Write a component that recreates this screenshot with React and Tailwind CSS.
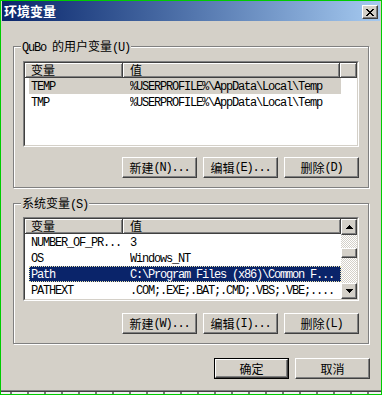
import React from 'react';

const latin = "font-['Liberation_Mono',monospace] tracking-[-1.2px]";
const han = "font-['Noto_Sans_CJK_SC',sans-serif]";

const isHan = (ch) => /[\u2e80-\u9fff\uff00-\uffef]/.test(ch);

// SimSun-like mixed text: CJK at full width, latin squeezed to 6px cells
const T = ({ text }) => {
  const runs = [];
  for (const ch of text) {
    const h = isHan(ch);
    const last = runs[runs.length - 1];
    if (last && last.h === h) last.s += ch;
    else runs.push({ h, s: ch });
  }
  return runs.map((r, i) => (
    <span key={i} className={r.h ? han : latin}>
      {r.s}
    </span>
  ));
};

const raised =
  'border border-t-white border-l-white border-r-[#404040] border-b-[#404040] shadow-[inset_-1px_-1px_0_#808080]';

const Button = ({ label, primary }) => {
  const face = (
    <div
      className={`flex h-full w-full items-center justify-center whitespace-pre bg-[#d4d0c8] text-[12px] leading-[16px] text-black ${raised}`}
    >
      <T text={label} />
    </div>
  );
  if (primary) return <div className="h-[21px] w-[75px] border border-black">{face}</div>;
  return <div className="h-[21px] w-[75px]">{face}</div>;
};

const Head = ({ w, label = '', pad = '' }) => (
  <div
    className={`h-[15px] shrink-0 ${w} ${pad} whitespace-pre border-r border-b border-r-[#404040] border-b-[#404040] bg-[#d4d0c8] text-[12px] leading-[14px] text-black shadow-[inset_1px_1px_0_#fff,inset_-1px_-1px_0_#808080]`}
  >
    <T text={label} />
  </div>
);

const Row = ({ name, value, state }) => {
  const tone =
    state === 'focus'
      ? 'bg-[#0a246a] text-white outline outline-1 outline-dotted outline-[#e8e2a8] -outline-offset-1'
      : state === 'idle'
        ? 'bg-[#d4d0c8] text-black'
        : 'text-black';
  return (
    <div className="flex h-[16px] pl-[4px]">
      <div className={`flex w-[312px] whitespace-pre text-[12px] leading-[16px] ${tone}`}>
        <div className="w-[101px] shrink-0 overflow-hidden pl-[2px]">
          <T text={name} />
        </div>
        <div className="flex-1 overflow-hidden">
          <T text={value} />
        </div>
      </div>
    </div>
  );
};

const Sunken = ({ h, children }) => (
  <div className={`${h} w-[336px] border border-t-[#808080] border-l-[#808080] border-r-white border-b-white`}>
    <div className="h-full w-full overflow-hidden border border-t-[#404040] border-l-[#404040] border-r-[#d4d0c8] border-b-[#d4d0c8] bg-white">
      {children}
    </div>
  </div>
);

const Group = ({ title, h, pt, children }) => (
  <div
    className={`relative ml-[12px] w-[356px] ${h} ${pt} border border-[#808080] px-[9px] shadow-[inset_1px_1px_0_#fff,1px_1px_0_#fff]`}
  >
    <div className="absolute left-[7px] top-[-9px] whitespace-pre bg-[#d4d0c8] px-[1px] text-[12px] leading-[16px] text-black">
      <T text={title} />
    </div>
    {children}
  </div>
);

const Arrow = ({ up }) => (
  <div className={`flex h-[16px] w-[16px] shrink-0 items-center justify-center bg-[#d4d0c8] ${raised}`}>
    <svg width="7" height="4" viewBox="0 0 7 4" shapeRendering="crispEdges">
      {up ? (
        <path d="M3 0h1v1h1v1h1v1h1v1H0V3h1V2h1V1h1z" fill="#000" />
      ) : (
        <path d="M0 0h7v1H6v1H5v1H4v1H3V3H2V2H1V1H0z" fill="#000" />
      )}
    </svg>
  </div>
);

const CloseX = () => (
  <svg width="8" height="7" viewBox="0 0 8 7" shapeRendering="crispEdges">
    <path
      d="M0 0h2v1H0zM6 0h2v1H6zM1 1h2v1H1zM5 1h2v1H5zM2 2h4v1H2zM3 3h2v1H3zM2 4h4v1H2zM1 5h2v1H1zM5 5h2v1H5zM0 6h2v1H0zM6 6h2v1H6z"
      fill="#000"
    />
  </svg>
);

export default function App() {
  return (
    <div className="flex h-[395px] w-[382px] flex-col border border-[#00cc00] bg-[#d4d0c8]">
      <div className="mx-[1px] flex h-[20px] shrink-0 justify-between bg-linear-to-r from-[#0a246a] to-[#a6caf0] pl-[2px] pr-[2px]">
        <span className="font-['Noto_Sans_CJK_SC',sans-serif] text-[13px] font-bold leading-[20px] text-white">
          环境变量
        </span>
        <div className={`mt-[4px] flex h-[14px] w-[16px] items-center justify-center bg-[#d4d0c8] ${raised}`}>
          <CloseX />
        </div>
      </div>

      <div className="mt-[25px]">
        <Group title="QuBo 的用户变量(U)" h="h-[142px]" pt="pt-[14px]">
          <Sunken h="h-[86px]">
            <div className="flex">
              <Head w="w-[98px]" label="变量" pad="pl-[6px]" />
              <Head w="w-[217px]" label="值" pad="pl-[7px]" />
              <Head w="flex-1" />
            </div>
            <Row name="TEMP" value="%USERPROFILE%\AppData\Local\Temp" state="idle" />
            <Row name="TMP" value="%USERPROFILE%\AppData\Local\Temp" />
          </Sunken>
          <div className="mt-[10px] flex justify-end gap-[6px]">
            <Button label="新建(N)..." />
            <Button label="编辑(E)..." />
            <Button label="删除(D)" />
          </div>
        </Group>
      </div>

      <div className="mt-[15px]">
        <Group title="系统变量(S)" h="h-[141px]" pt="pt-[13px]">
          <Sunken h="h-[84px]">
            <div className="flex h-full">
              <div className="flex-1">
                <div className="flex">
                  <Head w="w-[98px]" label="变量" pad="pl-[6px]" />
                  <Head w="w-[218px]" label="值" pad="pl-[7px]" />
                </div>
                <Row name="NUMBER_OF_PR..." value="3" />
                <Row name="OS" value="Windows_NT" />
                <Row name="Path" value="C:\Program Files (x86)\Common F..." state="focus" />
                <Row name="PATHEXT" value=".COM;.EXE;.BAT;.CMD;.VBS;.VBE;...." />
              </div>
              <div className="flex w-[16px] flex-col">
                <Arrow up />
                <div className="flex flex-1 flex-col bg-[conic-gradient(#fff_25%,#d4d0c8_0_50%,#fff_0_75%,#d4d0c8_0)] bg-[length:2px_2px]">
                  <div className="h-[13px]" />
                  <div className={`h-[10px] w-[16px] bg-[#d4d0c8] ${raised}`} />
                </div>
                <Arrow />
              </div>
            </div>
          </Sunken>
          <div className="mt-[12px] flex justify-end gap-[6px]">
            <Button label="新建(W)..." />
            <Button label="编辑(I)..." />
            <Button label="删除(L)" />
          </div>
        </Group>
      </div>

      <div className="ml-[12px] mt-[14px] flex w-[357px] justify-end gap-[6px]">
        <Button label="确定" primary />
        <Button label="取消" />
      </div>

      <div className="flex-1" />
      <div className="h-px bg-[#808080]" />
      <div className="h-px bg-[#404040]" />
      <div className="h-[2px] bg-[repeating-linear-gradient(90deg,#f2f2f2_0_9px,#777_9px_11px,#f2f2f2_11px_17px)]" />
    </div>
  );
}
